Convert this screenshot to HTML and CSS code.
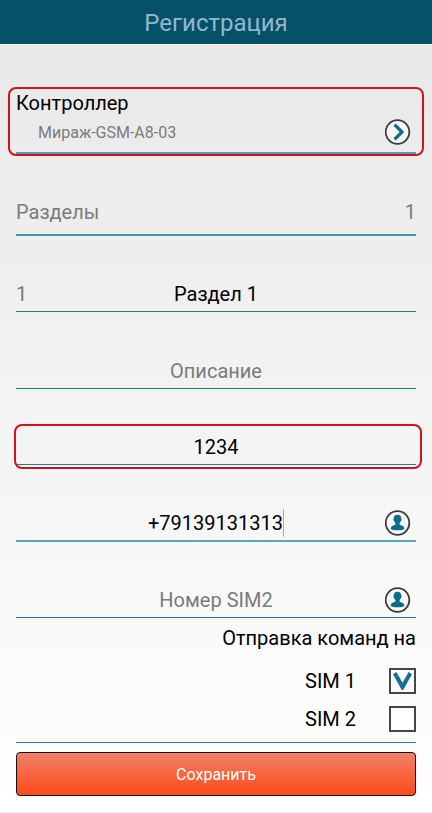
FILE: index.html
```html
<!DOCTYPE html>
<html lang="ru">

<head>
    <meta charset="UTF-8">
    <meta name="viewport" content="width=device-width, initial-scale=1.0">
    <title>Регистрация</title>
    <link rel="stylesheet" href="styles.css">
</head>

<body>
    <header class="header">
        <h1>Регистрация</h1>
    </header>

    <form class="form">
        <div class="controller highlight">
            <h2>Контроллер</h2>
            <div class="controller-row">
                <span class="controller-name">Мираж-GSM-A8-03</span>
                <button type="button" class="icon-btn" aria-label="Выбрать контроллер">
                    <svg viewBox="0 0 26 26">
                        <circle class="ring" cx="12.5" cy="13" r="11.8" />
                        <path class="arrow" d="M9.6 5.6 L17 13 L9.6 20.4" />
                    </svg>
                </button>
            </div>
        </div>

        <div class="sections">
            <label for="sections">Разделы</label>
            <input type="text" id="sections" value="1">
        </div>

        <div class="field">
            <label for="sectionName">1</label>
            <input type="text" id="sectionName" value="Раздел 1">
        </div>

        <div class="field description">
            <input type="text" id="description" placeholder="Описание" aria-label="Описание">
        </div>

        <div class="field highlight code">
            <input type="text" id="code" value="1234" aria-label="Код">
        </div>

        <div class="field active">
            <input type="tel" id="sim1Number" value="+79139131313" aria-label="Номер SIM1">
            <button type="button" class="icon-btn" aria-label="Контакты SIM1">
                <svg viewBox="0 0 26 26">
                    <circle class="ring" cx="12.5" cy="13" r="11.8" />
                    <path class="person" d="M12.5 4.8 C15.3 4.8 16.4 6.6 16.3 8.8 C16.9 9 16.6 10.6 15.9 11 C15.6 12.1 15 12.8 14.6 13.3 L14.6 14.6 C16 15.7 19.1 15.6 19.3 18.8 C18 20.8 7 20.8 5.7 18.8 C5.9 15.6 9 15.7 10.4 14.6 L10.4 13.3 C10 12.8 9.4 12.1 9.1 11 C8.4 10.6 8.1 9 8.7 8.8 C8.6 6.6 9.7 4.8 12.5 4.8 Z" />
                </svg>
            </button>
        </div>

        <div class="field">
            <input type="tel" id="sim2Number" placeholder="Номер SIM2" aria-label="Номер SIM2">
            <button type="button" class="icon-btn" aria-label="Контакты SIM2">
                <svg viewBox="0 0 26 26">
                    <circle class="ring" cx="12.5" cy="13" r="11.8" />
                    <path class="person" d="M12.5 4.8 C15.3 4.8 16.4 6.6 16.3 8.8 C16.9 9 16.6 10.6 15.9 11 C15.6 12.1 15 12.8 14.6 13.3 L14.6 14.6 C16 15.7 19.1 15.6 19.3 18.8 C18 20.8 7 20.8 5.7 18.8 C5.9 15.6 9 15.7 10.4 14.6 L10.4 13.3 C10 12.8 9.4 12.1 9.1 11 C8.4 10.6 8.1 9 8.7 8.8 C8.6 6.6 9.7 4.8 12.5 4.8 Z" />
                </svg>
            </button>
        </div>

        <fieldset class="commands">
            <legend>Отправка команд на</legend>
            <label for="sim1">SIM 1 <input type="checkbox" id="sim1" checked></label>
            <label for="sim2">SIM 2 <input type="checkbox" id="sim2"></label>
        </fieldset>

        <button type="submit" class="save-btn">Сохранить</button>
    </form>
</body>

</html>
```

FILE: styles.css
```css
* {
    margin: 0;
    padding: 0;
    box-sizing: border-box;
}

body {
    min-height: 100vh;
    font-family: Roboto, sans-serif;
    font-size: 20px;
    color: #000;
    background: linear-gradient(#e7e7e7, #fff);
    border-bottom: 1px solid #ececec;
}

.header {
    height: 45px;
    padding-top: 4px;
    background-color: #07506a;
    border-bottom: 1px solid #f8f8f8;
    text-align: center;
}

h1 {
    font-size: 24px;
    font-weight: normal;
    line-height: 38px;
    color: #8fb9c9;
}

.form {
    padding: 0 16px 16px;
}

input {
    font: inherit;
    color: inherit;
    background: none;
    border: none;
    outline: none;
    min-width: 0;
}

input::placeholder {
    color: #7b7b7b;
    opacity: 1;
}

.highlight {
    position: relative;
}

.highlight::after {
    content: "";
    position: absolute;
    inset: 42px -8px -4px;
    border: 2px solid #d4121c;
    border-radius: 8px;
    pointer-events: none;
}

.code::after {
    inset: 35px -6px -5px -2px;
}

.controller {
    padding: 46px 0 7px;
    border-bottom: 2px solid #4c9fb5;
}

h2 {
    font-size: 20px;
    font-weight: normal;
    line-height: 24px;
    margin-bottom: 4px;
}

.controller-row {
    display: flex;
    justify-content: space-between;
    align-items: center;
    padding: 0 5px 0 22px;
}

.controller-name {
    font-size: 16px;
    color: #7b7b7b;
}

.icon-btn {
    width: 26px;
    height: 26px;
    background: none;
    border: none;
    cursor: pointer;
}

.icon-btn svg {
    display: block;
    width: 26px;
    height: 26px;
}

.ring {
    fill: #f7f7f7;
    stroke: #3c3a3c;
    stroke-width: 1.8;
}

.arrow {
    fill: none;
    stroke: #0d6c8b;
    stroke-width: 3.2;
}

.person {
    fill: #0d6c8b;
}

.sections {
    display: flex;
    justify-content: space-between;
    align-items: flex-end;
    height: 82px;
    padding-bottom: 8px;
    border-bottom: 2px solid #4594ac;
    line-height: 28px;
    color: #7b7b7b;
}

.sections input {
    width: 80px;
    height: 28px;
    text-align: right;
}

.field {
    display: grid;
    grid-template-columns: 40px 1fr 40px;
    align-content: end;
    align-items: center;
    height: 76px;
    padding-bottom: 3px;
    border-bottom: 1px solid #1f7c9a;
}

.field label {
    color: #7b7b7b;
}

.field input {
    grid-column: 2;
    height: 28px;
    text-align: center;
}

.field .icon-btn {
    margin-left: 9px;
}

.description {
    height: 77px;
}

.active {
    height: 77px;
    border-bottom: 2px solid #57a7bd;
}

/* the input shrinks to its text so the cursor stands right after it */
.active input {
    justify-self: center;
    field-sizing: content;
    border-right: 1px solid #aaa;
}

.commands {
    display: flex;
    flex-direction: column;
    align-items: flex-end;
    padding: 6px 0 4px;
    border: none;
    border-bottom: 1px solid #2484a3;
}

.commands legend {
    float: right;
    width: 100%;
    margin-bottom: 10px;
    line-height: 28px;
    text-align: right;
}

.commands label {
    display: flex;
    justify-content: space-between;
    align-items: center;
    width: 111px;
    height: 38px;
}

.commands input {
    appearance: none;
    display: grid;
    place-items: center;
    width: 27px;
    height: 26px;
    border: 2px solid #474547;
    background-color: #fff;
}

.commands input:checked::before {
    content: "";
    width: 19px;
    height: 18px;
    background-color: #17708f;
    clip-path: polygon(0 12%, 18% 0, 50% 60%, 82% 0, 100% 12%, 54% 100%, 46% 100%);
}

.save-btn {
    display: block;
    width: 100%;
    height: 44px;
    margin-top: 9px;
    font-family: inherit;
    font-size: 16px;
    color: #fff;
    background: linear-gradient(#f3806a, #fb4b18);
    border: 1px solid #1c0d09;
    border-radius: 4px;
    cursor: pointer;
}
```
